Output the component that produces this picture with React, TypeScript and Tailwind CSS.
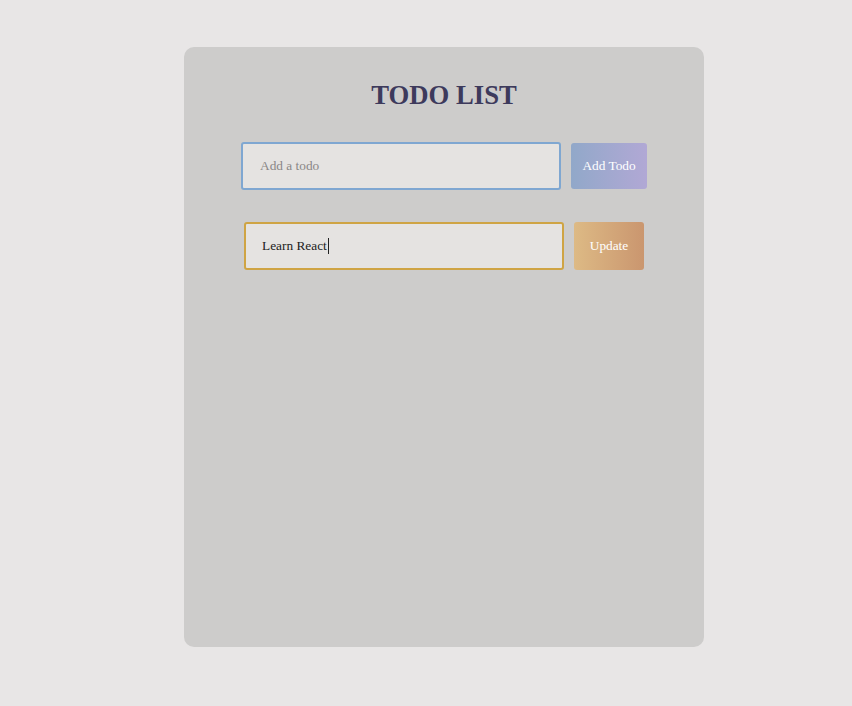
import { useState } from "react";

const serif = "font-['Liberation_Serif','Times_New_Roman',serif]";

export default function App() {
  const [todo, setTodo] = useState("");

  return (
    <div className={`min-h-screen bg-[#e8e6e6] pt-[47px] pl-[184px] ${serif}`}>
      <div className="flex h-[600px] w-[520px] flex-col items-center rounded-[10px] bg-[#cdcccb] pt-[33px]">
        <h1 className="m-0 text-[26.7px] leading-[31px] font-bold text-[#3d3a5c]">TODO LIST</h1>

        <form
          className="mt-[31px] flex items-center gap-[10px]"
          onSubmit={(e) => e.preventDefault()}
        >
          <input
            value={todo}
            onChange={(e) => setTodo(e.target.value)}
            placeholder="Add a todo"
            className="h-[48px] w-[320px] rounded-[3px] border-2 border-[#7fa7d1] bg-[#e5e3e1] px-[17px] text-[13.333px] text-[#222] outline-none placeholder:text-[#8a8786]"
          />
          <button
            type="submit"
            className="h-[46px] w-[76px] rounded-[3px] bg-gradient-to-r from-[#91a8c9] to-[#b1a8d5] text-[13.333px] text-white"
          >
            Add Todo
          </button>
        </form>

        <div className="mt-[32px] flex items-center gap-[10px]">
          <div className="flex h-[48px] w-[320px] items-center rounded-[3px] border-2 border-[#cfa444] bg-[#e5e3e1] px-[16px] text-[13.333px] text-[#222]">
            <span>Learn React</span>
            <span className="ml-px h-[16px] w-px bg-[#222]" />
          </div>
          <button className="h-[48px] w-[70px] rounded-[3px] bg-gradient-to-r from-[#ddba85] to-[#ca966f] text-[13.333px] text-white">
            Update
          </button>
        </div>
      </div>
    </div>
  );
}
